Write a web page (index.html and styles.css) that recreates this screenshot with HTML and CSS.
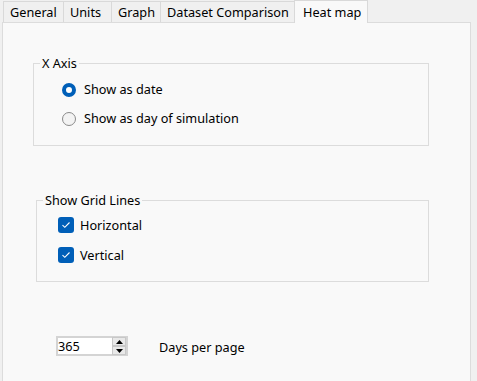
FILE: index.html
```html
<!DOCTYPE html>
<html lang="en">
<head>
    <meta charset="UTF-8">
    <title>Heat map options</title>
    <link rel="stylesheet" href="styles.css">
</head>
<body>
    <div class="tabs">
        <div class="tab tab-general">General</div>
        <div class="tab tab-units">Units</div>
        <div class="tab tab-graph">Graph</div>
        <div class="tab tab-dataset">Dataset Comparison</div>
        <div class="tab tab-heat active">Heat map</div>
    </div>
    <div class="panel">
        <fieldset class="group x-axis">
            <legend>X Axis</legend>
            <div class="group-body">
                <label class="option">
                    <span class="radio checked"></span>
                    <span>Show as date</span>
                </label>
                <label class="option">
                    <span class="radio"></span>
                    <span>Show as day of simulation</span>
                </label>
            </div>
        </fieldset>

        <fieldset class="group grid-lines">
            <legend>Show Grid Lines</legend>
            <div class="group-body">
                <label class="option">
                    <span class="check">
                        <svg width="10" height="8" viewBox="0 0 10 8"><path d="M1.5 4.2 L3.8 6.3 L8.5 1.5" fill="none" stroke="#fff" stroke-width="1.1"/></svg>
                    </span>
                    <span>Horizontal</span>
                </label>
                <label class="option">
                    <span class="check">
                        <svg width="10" height="8" viewBox="0 0 10 8"><path d="M1.5 4.2 L3.8 6.3 L8.5 1.5" fill="none" stroke="#fff" stroke-width="1.1"/></svg>
                    </span>
                    <span>Vertical</span>
                </label>
            </div>
        </fieldset>

        <div class="days">
            <div class="spinner">
                <span class="value">365</span>
                <div class="spin-buttons">
                    <span class="spin up"><svg width="7" height="4" viewBox="0 0 7 4"><path d="M0 4 L3.5 0 L7 4 Z" fill="#000"/></svg></span>
                    <span class="spin down"><svg width="7" height="4" viewBox="0 0 7 4"><path d="M0 0 L3.5 4 L7 0 Z" fill="#000"/></svg></span>
                </div>
            </div>
            <span class="days-label">Days per page</span>
        </div>
    </div>
</body>
</html>
```

FILE: styles.css
```css
body {
    margin: 0;
    padding: 0;
    background: #f0f0f0;
    font-family: "Noto Sans", "Liberation Sans", sans-serif;
    font-size: 12.7px;
    line-height: 17px;
    color: #000;
    overflow: hidden;
}

.tabs {
    display: flex;
    align-items: flex-end;
    height: 22px;
    padding-left: 3px;
    position: relative;
    z-index: 1;
}

.tab {
    box-sizing: border-box;
    height: 21px;
    line-height: 20px;
    padding-left: 6px;
    border: 1px solid #d9d9d9;
    border-bottom: none;
    border-right: none;
    background: #f0f0f0;
    white-space: nowrap;
}

.tab-general { width: 60px; }
.tab-units { width: 48px; }
.tab-graph { width: 49px; }
.tab-dataset { width: 134px; }

.tab.active {
    width: 74px;
    height: 23px;
    line-height: 22px;
    padding-left: 8px;
    margin-bottom: -1px;
    background: #f9f9f9;
    border-right: 1px solid #d9d9d9;
}

.panel {
    margin-left: 2px;
    width: 467px;
    height: 420px;
    border: 1px solid #dcdcdc;
    background: #f9f9f9;
}

.group {
    border: 1px solid #dcdcdc;
    margin: 0;
    padding: 0;
    box-sizing: border-box;
}

.group legend {
    padding: 0 2px;
    margin-left: 6px;
}

.x-axis {
    margin: 32px 0 0 30px;
    width: 396px;
    height: 91px;
}

.x-axis .group-body {
    padding: 3px 0 0 28px;
}

.grid-lines {
    margin: 46px 0 0 33px;
    width: 393px;
    height: 90px;
}

.grid-lines .group-body {
    padding: 1px 0 0 21px;
}

.option {
    display: flex;
    align-items: center;
    height: 29px;
    gap: 8px;
}

.grid-lines .option {
    height: 30px;
    gap: 6px;
}

.radio {
    width: 12px;
    height: 12px;
    border-radius: 50%;
    border: 1px solid #8a8a8a;
    background: #f3f3f3;
    box-sizing: content-box;
}

.radio.checked {
    width: 6px;
    height: 6px;
    border: 4px solid #005fb8;
    background: #fff;
}

.check {
    width: 16px;
    height: 16px;
    border-radius: 3px;
    background: #005fb8;
    display: flex;
    align-items: center;
    justify-content: center;
}

.days {
    display: flex;
    align-items: center;
    margin: 54px 0 0 53px;
    gap: 31px;
}

.spinner {
    display: flex;
    justify-content: space-between;
    width: 68px;
    height: 16px;
    border: 2px solid #d4d4d4;
    background: #fff;
}

.value {
    line-height: 16px;
    padding-left: 0;
}

.spin-buttons {
    display: flex;
    flex-direction: column;
    width: 14px;
    height: 18px;
    margin-top: -1px;
}

.spin {
    flex: 1;
    display: flex;
    align-items: center;
    justify-content: center;
    background: #e9e9e9;
    border: 1px solid #c8c8c8;
}

.days-label {
    padding-top: 2px;
}
```
